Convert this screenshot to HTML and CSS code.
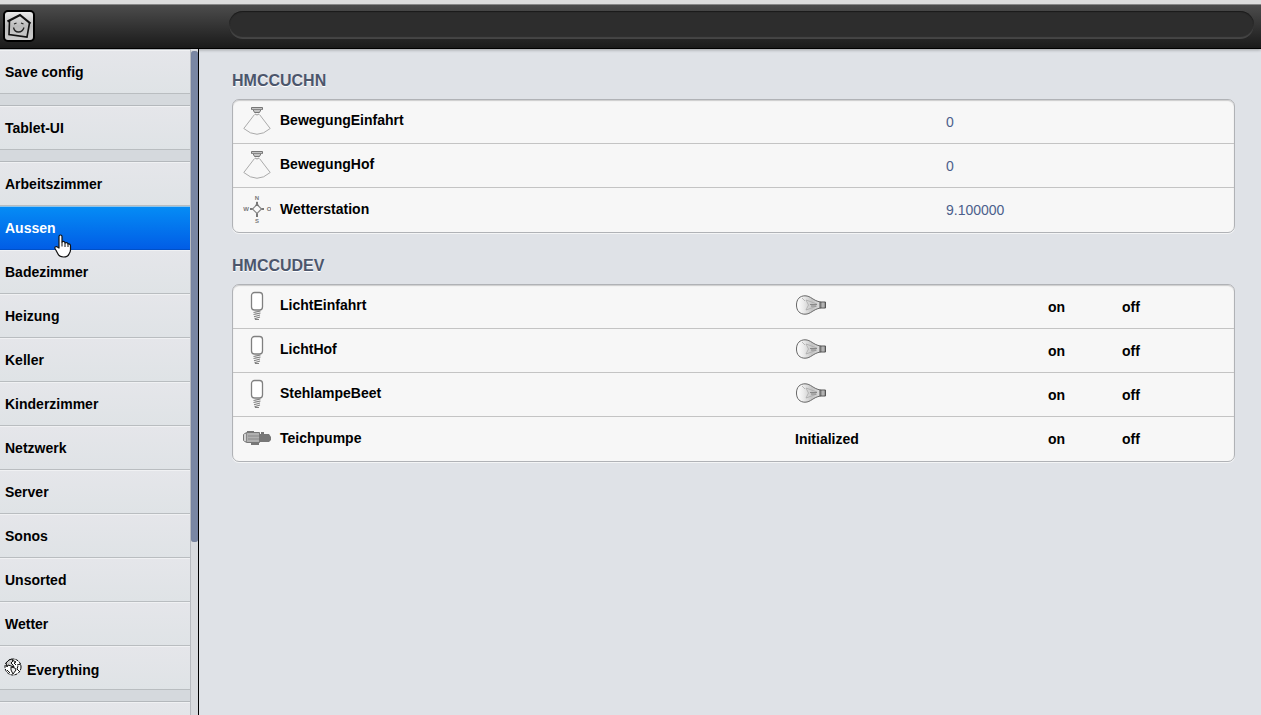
FILE: index.html
```html
<!DOCTYPE html>
<html lang="de">
<head>
    <meta charset="UTF-8">
    <meta name="viewport" content="width=device-width, initial-scale=1.0">
    <title>Aussen</title>
    <link rel="stylesheet" href="styles.css">
</head>
<body>
    <!-- Shared icons -->
    <svg class="sprites" aria-hidden="true">
        <defs>
            <linearGradient id="glass" x1="0" x2="1">
                <stop offset="0" stop-color="#fff"/>
                <stop offset=".3" stop-color="#eaeaea"/>
                <stop offset=".65" stop-color="#c4c4c4"/>
                <stop offset="1" stop-color="#ddd"/>
            </linearGradient>
        </defs>
        <symbol id="icon-motion" viewBox="0 0 28 30">
            <path d="M8.500 1.500h11v2h-1.500l-1.500 3h-5l-1.500-3h-1.500z" fill="#c4c4c4" stroke="#777"/>
            <path d="M9 3.500h10" stroke="#888"/>
            <path d="M11.500 8.500L.8 22.500Q14 34 27.200 22.500L16.500 8.500" fill="none" stroke="#aaa"/>
            <path d="M12 8q2 2 4 0" fill="none" stroke="#999"/>
        </symbol>
        <symbol id="icon-bulb" viewBox="0 0 28 30">
            <rect x="8.500" y="1.500" width="11" height="17.500" rx="3" fill="#fff" stroke="#808080" stroke-width="1.300"/>
            <path d="M10.500 21.500l7-1.500M10.500 23.500l7-1.500M11 25.700l6-1.700M11.500 27.700l5.500-1.700M12 28.500h4" fill="none" stroke="#808080" stroke-width="1.100"/>
        </symbol>
        <symbol id="icon-lamp" viewBox="0 0 32 20">
            <path d="M1.500 10C1.500 4 5 .8 10 .8c6 0 8 5 15.500 6.200v6C18 14.200 16 19.200 10 19.200 5 19.200 1.500 16 1.500 10z" fill="url(#glass)" stroke="#666"/>
            <path d="M7 3l3 3M11 5l2.500 5-2.500 5M11 5l11 4M11 15l11-4" fill="none" stroke="#aaa" stroke-width=".8"/>
            <path d="M15 9.500h7M16 11h5" stroke="#888"/>
            <path d="M25 7h5.500v6H25z" fill="#999" stroke="#555"/>
            <path d="M28 7.500v5" stroke="#ccc"/>
        </symbol>
    </svg>

    <header class="topbar">
        <a class="logo" href="#" aria-label="Home">
            <svg viewBox="0 0 32 32">
                <defs>
                    <linearGradient id="tile" x1="0" x2="0" y1="0" y2="1">
                        <stop offset="0" stop-color="#eee"/>
                        <stop offset=".5" stop-color="#bbb"/>
                        <stop offset="1" stop-color="#ccc"/>
                    </linearGradient>
                </defs>
                <rect x="1" y="1" width="30" height="30" rx="4" fill="url(#tile)" stroke="#000" stroke-width="2"/>
                <path d="M6.500 11L6 24.500l18 2.500L26.500 13" fill="none" stroke="#111" stroke-width="1.600"/>
                <path d="M4.500 11.500L17 5l10.500 8.500" fill="none" stroke="#111" stroke-width="2.200"/>
                <path d="M10.500 17.500q1 4.500 5 4.500t5.500-4.500M11 14l2.500-1M18 13l2.500 1" fill="none" stroke="#222" stroke-width="1.300"/>
            </svg>
        </a>
        <form class="command">
            <input class="command-input" type="text" aria-label="Command">
        </form>
    </header>

    <div class="layout">
        <nav class="sidebar">
            <div class="menu">
                <ul class="menu-group">
                    <li><a class="menu-link" href="#">Save config</a></li>
                </ul>
                <ul class="menu-group">
                    <li><a class="menu-link" href="#">Tablet-UI</a></li>
                </ul>
                <ul class="menu-group">
                    <li><a class="menu-link" href="#">Arbeitszimmer</a></li>
                    <li><a class="menu-link active" href="#">Aussen</a></li>
                    <li><a class="menu-link" href="#">Badezimmer</a></li>
                    <li><a class="menu-link" href="#">Heizung</a></li>
                    <li><a class="menu-link" href="#">Keller</a></li>
                    <li><a class="menu-link" href="#">Kinderzimmer</a></li>
                    <li><a class="menu-link" href="#">Netzwerk</a></li>
                    <li><a class="menu-link" href="#">Server</a></li>
                    <li><a class="menu-link" href="#">Sonos</a></li>
                    <li><a class="menu-link" href="#">Unsorted</a></li>
                    <li><a class="menu-link" href="#">Wetter</a></li>
                    <li>
                        <a class="menu-link with-icon" href="#">
                            <svg class="globe" viewBox="0 0 18 18">
                                <circle cx="9" cy="9" r="8" fill="#fff" stroke="#000" stroke-dasharray="3 1"/>
                                <path d="M2 5l3-3 3-1 1 2-2 2 2 2 1 2-3-1-3-1-1 2z" fill="#ccc" stroke="#111"/>
                                <path d="M7 9l4 1 1 2-3 4-2-4z" fill="#eee" stroke="#111"/>
                                <path d="M8 2l4 2-2 1 2 2M13 7l4-1M14 8l-1 3 2 2M3 12l3 3" fill="none" stroke="#111"/>
                            </svg>
                            Everything
                        </a>
                    </li>
                </ul>
                <ul class="menu-group">
                    <li><a class="menu-link" href="#" aria-label="More"></a></li>
                </ul>
            </div>
            <div class="scroll-track"><div class="scroll-thumb"></div></div>
            <svg class="pointer" viewBox="0 0 18 24" aria-hidden="true">
                <path d="M5 14V2.500Q5 1 6.500 1T8 2.500V8Q10.500 6.500 11 9q2.500-1 3 1 2.500-.5 2.500 2v4q0 2-1.500 4-1 3-5.500 3-4 0-5.500-3L1 14.500q-.5-2 1.500-2z" fill="#fff" stroke="#111" stroke-width="1.200" stroke-linejoin="round"/>
                <path d="M8 8v4.500M11 9v4M14 10v3" stroke="#111"/>
            </svg>
        </nav>

        <main class="content">
            <section class="room">
                <h2 class="room-title">HMCCUCHN</h2>
                <table class="devices readings">
                    <tr>
                        <td class="icon"><svg class="device-icon"><use href="#icon-motion"/></svg></td>
                        <td class="name"><a href="#">BewegungEinfahrt</a></td>
                        <td class="value">0</td>
                    </tr>
                    <tr>
                        <td class="icon"><svg class="device-icon"><use href="#icon-motion"/></svg></td>
                        <td class="name"><a href="#">BewegungHof</a></td>
                        <td class="value">0</td>
                    </tr>
                    <tr>
                        <td class="icon">
                            <svg class="device-icon compass" viewBox="0 0 28 30">
                                <path d="M14 8v4M14 18v5M7 15h4M17 15h4" stroke="#777" stroke-width="2"/>
                                <path d="M14 10.500l4.500 4.500-4.500 4.500L9.500 15z" fill="#fafafa" stroke="#888" stroke-width="1.200"/>
                                <path d="M14 7l1.800 5h-3.600z" fill="#777"/>
                                <text x="14" y="6">N</text>
                                <text x="3" y="17">W</text>
                                <text x="26" y="17">O</text>
                                <text x="14" y="29">S</text>
                            </svg>
                        </td>
                        <td class="name"><a href="#">Wetterstation</a></td>
                        <td class="value">9.100000</td>
                    </tr>
                </table>
            </section>

            <section class="room">
                <h2 class="room-title">HMCCUDEV</h2>
                <table class="devices switches">
                    <tr>
                        <td class="icon"><svg class="device-icon"><use href="#icon-bulb"/></svg></td>
                        <td class="name"><a href="#">LichtEinfahrt</a></td>
                        <td class="state"><a href="#" aria-label="off"><svg class="lamp"><use href="#icon-lamp"/></svg></a></td>
                        <td class="cmd"><a href="#">on</a></td>
                        <td class="cmd"><a href="#">off</a></td>
                    </tr>
                    <tr>
                        <td class="icon"><svg class="device-icon"><use href="#icon-bulb"/></svg></td>
                        <td class="name"><a href="#">LichtHof</a></td>
                        <td class="state"><a href="#" aria-label="off"><svg class="lamp"><use href="#icon-lamp"/></svg></a></td>
                        <td class="cmd"><a href="#">on</a></td>
                        <td class="cmd"><a href="#">off</a></td>
                    </tr>
                    <tr>
                        <td class="icon"><svg class="device-icon"><use href="#icon-bulb"/></svg></td>
                        <td class="name"><a href="#">StehlampeBeet</a></td>
                        <td class="state"><a href="#" aria-label="off"><svg class="lamp"><use href="#icon-lamp"/></svg></a></td>
                        <td class="cmd"><a href="#">on</a></td>
                        <td class="cmd"><a href="#">off</a></td>
                    </tr>
                    <tr>
                        <td class="icon">
                            <svg class="device-icon" viewBox="0 0 28 30">
                                <path d="M4 8h7v2H4zM8 19h8v3H8z" fill="#777"/>
                                <path d="M3.500 9.500h13v10h-13l-3-2v-6z" fill="#b0b0b0" stroke="#777"/>
                                <path d="M3.500 10v9M5 13h11M5 16h11" stroke="#888"/>
                                <path d="M2 11v7" stroke="#f7f7f7"/>
                                <path d="M16 11h2V9h3v2h5l2 3v3l-2 2H16z" fill="#777"/>
                            </svg>
                        </td>
                        <td class="name"><a href="#">Teichpumpe</a></td>
                        <td class="state"><a href="#">Initialized</a></td>
                        <td class="cmd"><a href="#">on</a></td>
                        <td class="cmd"><a href="#">off</a></td>
                    </tr>
                </table>
            </section>
        </main>
    </div>
</body>
</html>
```

FILE: styles.css
```css
* {
    box-sizing: border-box;
}
body {
    margin: 0;
    height: 100vh;
    display: flex;
    flex-direction: column;
    overflow: hidden;
    border-top: 4px solid #ddd;
    background-color: #dfe2e7;
    color: #000;
    font-family: "Liberation Sans", Arial, sans-serif;
    font-size: 14px;
}
a {
    color: inherit;
    font-weight: bold;
    text-decoration: none;
}
.sprites {
    position: absolute;
    width: 0;
    height: 0;
}

/* Header */
.topbar {
    flex: none;
    display: flex;
    height: 45px;
    padding: 6px 7px 0 3px;
    border-top: 1px solid #888;
    border-bottom: 1px solid #000;
    background: linear-gradient(#4c4c4c, #1a1a1a);
    box-shadow: 0 1px 3px rgba(0, 0, 0, 0.3);
}
.logo {
    width: 32px;
    height: 32px;
    margin-top: -1px;
}
.logo svg {
    display: block;
}
.command {
    flex: 1;
    margin-left: 194px;
}
.command-input {
    display: block;
    width: 100%;
    height: 28px;
    padding: 0 14px;
    border: 0;
    border-radius: 14px;
    outline: none;
    background-color: #2d2d2d;
    box-shadow: inset 0 1px 1px #1a1a1a, inset 0 -2px 1px #454545;
    color: #ccc;
    font-size: 14px;
}

/* Sidebar */
.layout {
    flex: 1;
    display: flex;
    min-height: 0;
}
.sidebar {
    position: relative;
    display: flex;
    width: 199px;
    border-right: 1px solid #000;
}
.menu {
    flex: 1;
    overflow: hidden;
    padding-top: 1px;
}
.menu-group {
    margin: 0 0 12px;
    padding: 0;
    list-style: none;
    box-shadow: 0 -1px #b4b8bc;
}
.menu-group:not(:last-child) {
    box-shadow: 0 -1px #b4b8bc, 0 12px #d5d9dd;
}
.menu-link {
    display: flex;
    align-items: center;
    height: 44px;
    padding-left: 5px;
    border-top: 1px solid #f0f1f3;
    border-bottom: 1px solid #b9bdc0;
    background: linear-gradient(#e5e6ea, #dfe3e6);
}
.menu-link.active {
    border-top-color: #8fc4e8;
    border-bottom-color: #0050c8;
    background: linear-gradient(#058cf5, #015de6);
    color: #fff;
}
.menu-link.with-icon {
    gap: 5px;
    padding-top: 4px;
    padding-left: 4px;
}
.globe {
    width: 18px;
    height: 18px;
    margin-bottom: 6px;
}
.scroll-track {
    width: 8px;
    padding-top: 2px;
    border-left: 1px solid #b8bbc0;
    background-color: #d8dade;
}
.scroll-thumb {
    height: 74%;
    border-radius: 3px;
    background-color: #7986a3;
    box-shadow: inset 0 0 1px #626c84;
}
.pointer {
    position: absolute;
    top: 185px;
    left: 54px;
    width: 18px;
    height: 24px;
}

/* Content */
.content {
    flex: 1;
    padding: 20px 26px 0 33px;
}
.room {
    margin-bottom: 21px;
}
.room-title {
    margin: 0;
    padding: 1px 0 7px;
    color: #4c566c;
    font-size: 16px;
    line-height: 22px;
    text-shadow: 0 1px #fff;
}
.devices {
    width: 100%;
    table-layout: fixed;
    border: 1px solid #b0b2b6;
    border-radius: 7px;
    border-spacing: 0;
    background-color: #f7f7f7;
    box-shadow: 0 1px #f4f5f6, inset 0 1px 1px #ccc;
}
.devices td {
    height: 44px;
    padding: 0;
    border-bottom: 1px solid #c4c4c4;
}
.devices tr:last-child td {
    border-bottom: 0;
}
.devices .icon {
    width: 47px;
    padding-bottom: 2px;
    padding-left: 10px;
}
.device-icon {
    display: block;
    width: 28px;
    height: 30px;
}
.devices .name {
    padding-bottom: 3px;
}
.compass text {
    fill: #777;
    font-size: 6px;
    font-weight: bold;
    text-anchor: middle;
}
.devices .value {
    width: 288px;
    color: #4c5f8c;
}
.devices .state {
    width: 253px;
}
.lamp {
    display: block;
    width: 32px;
    height: 20px;
    margin-bottom: 4px;
}
.devices .cmd {
    width: 74px;
}
.devices .cmd:last-child {
    width: 112px;
}
```
